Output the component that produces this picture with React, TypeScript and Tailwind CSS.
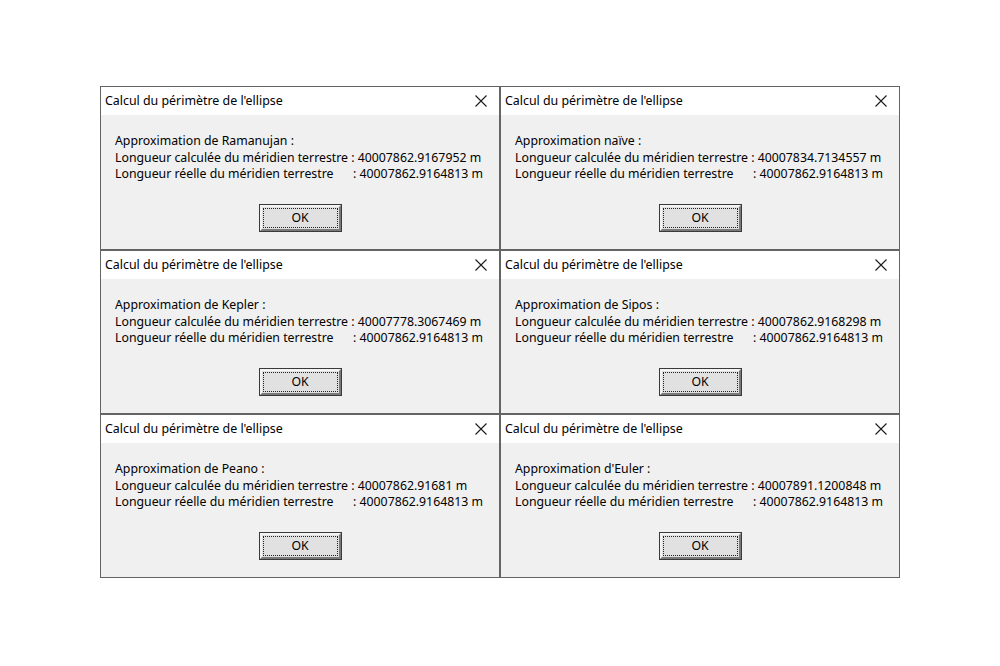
import React from "react";

const dialogs = [
  { name: "de Ramanujan", value: "40007862.9167952" },
  { name: "naïve", value: "40007834.7134557" },
  { name: "de Kepler", value: "40007778.3067469" },
  { name: "de Sipos", value: "40007862.9168298" },
  { name: "de Peano", value: "40007862.91681" },
  { name: "d'Euler", value: "40007891.1200848" },
];

const font = { fontFamily: '"Noto Sans", "Open Sans", sans-serif' };

function CloseIcon() {
  return (
    <svg width="12" height="12" viewBox="0 0 12 12" className="block">
      <path d="M0.5 0.5 L11.5 11.5 M11.5 0.5 L0.5 11.5" stroke="#1a1a1a" strokeWidth="1.1" fill="none" />
    </svg>
  );
}

function MessageBox({ name, value }: { name: string; value: string }) {
  return (
    <div className="flex h-[164px] w-[400px] flex-col border border-[#646464] bg-[#f0f0f0]">
      <div className="flex h-[28px] items-center justify-between bg-white pl-[4px] pr-[12px] text-[12.4px] text-black">
        <span>Calcul du périmètre de l'ellipse</span>
        <CloseIcon />
      </div>
      <div className="flex flex-1 flex-col pl-[14px] pt-[18px] text-[12.3px] leading-[16.5px] text-black">
        <div>Approximation {name} :</div>
        <div className="whitespace-nowrap">
          Longueur calculée du méridien terrestre : {value} m
        </div>
        <div className="flex whitespace-nowrap">
          <span className="w-[238px]">Longueur réelle du méridien terrestre</span>
          <span>: 40007862.9164813 m</span>
        </div>
      </div>
      <div className="flex justify-center pb-[17px]">
        <div className="h-[28px] w-[83px] border border-[#3a3a3a] bg-[#e1e1e1]">
          <div className="h-full w-full border-[2px] border-t-[#f4f4f4] border-l-[#f4f4f4] border-b-[#7a7a7a] border-r-[#7a7a7a] p-[1px]">
            <div className="flex h-full w-full items-center justify-center border border-dotted border-[#222] text-[12.3px] text-black">
              OK
            </div>
          </div>
        </div>
      </div>
    </div>
  );
}

export default function App() {
  return (
    <div className="h-[666px] w-[1000px] bg-white pl-[100px] pt-[86px]" style={font}>
      <div className="grid w-[800px] grid-cols-2">
        {dialogs.map((d) => (
          <MessageBox key={d.name} name={d.name} value={d.value} />
        ))}
      </div>
    </div>
  );
}
